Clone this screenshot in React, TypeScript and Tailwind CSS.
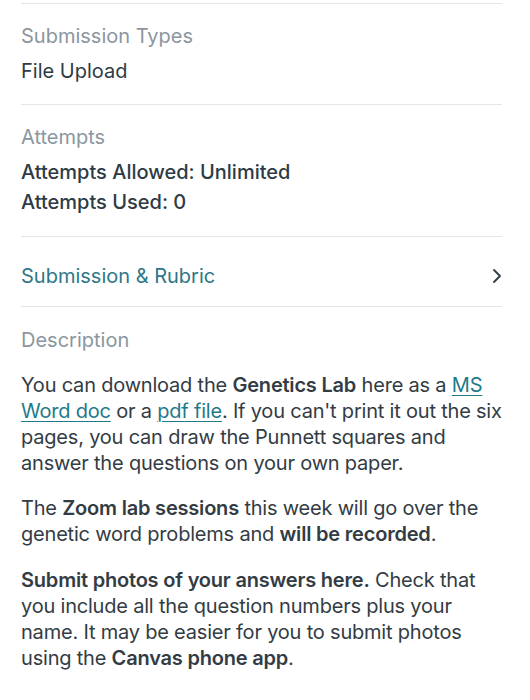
const link = 'text-[#1e7a8a] underline underline-offset-[3px] decoration-1';

function Divider() {
  return <div className="h-px bg-[#e3e5e7]" />;
}

export default function App() {
  return (
    <div
      className="bg-white w-[530px] h-[700px] overflow-hidden pl-[21px] pr-[28px] text-[#2d3b45] text-[20px]"
      style={{ fontFamily: 'Inter, "Noto Sans", sans-serif' }}
    >
      <div className="pt-[3px]">
        <Divider />
      </div>

      <div className="pt-[19px] pb-[20px]">
        <div className="text-[#8b969e] leading-[26px]">Submission Types</div>
        <div className="mt-[9px] leading-[26px]">File Upload</div>
      </div>
      <Divider />

      <div className="pt-[19px] pb-[19px]">
        <div className="text-[#8b969e] leading-[26px]">Attempts</div>
        <div className="mt-[7px] leading-[30px] font-medium">
          <div>Attempts Allowed: Unlimited</div>
          <div>Attempts Used: 0</div>
        </div>
      </div>
      <Divider />

      <div className="flex items-center justify-between h-[69px] pt-[9px]">
        <span className="text-[#2f7786]">Submission &amp; Rubric</span>
        <svg width="10" height="16" viewBox="0 0 10 16" fill="none">
          <path d="M2 2 L8 8 L2 14" stroke="#2d3b45" strokeWidth="1.8" strokeLinecap="round" strokeLinejoin="round" />
        </svg>
      </div>
      <Divider />

      <div className="pt-[20px]">
        <div className="text-[#8b969e] leading-[26px]">Description</div>
        <div className="mt-[19px] leading-[26px] text-[#333c44] tracking-[-0.2px]">
          <p>
            You can download the <b className="font-semibold">Genetics Lab</b> here as a{' '}
            <span className={link}>MS Word doc</span> or a <span className={link}>pdf file</span>. If you can't
            print it out the six pages, you can draw the Punnett squares and answer the questions on your own paper.
          </p>
          <p className="mt-[19px]">
            The <b className="font-semibold">Zoom lab sessions</b> this week will go over the genetic word problems
            and <b className="font-semibold">will be recorded</b>.
          </p>
          <p className="mt-[20px]">
            <b className="font-semibold">Submit photos of your answers here.</b> Check that you include all the
            question numbers plus your name. It may be easier for you to submit photos using the{' '}
            <b className="font-semibold">Canvas phone app</b>.
          </p>
        </div>
      </div>
    </div>
  );
}
